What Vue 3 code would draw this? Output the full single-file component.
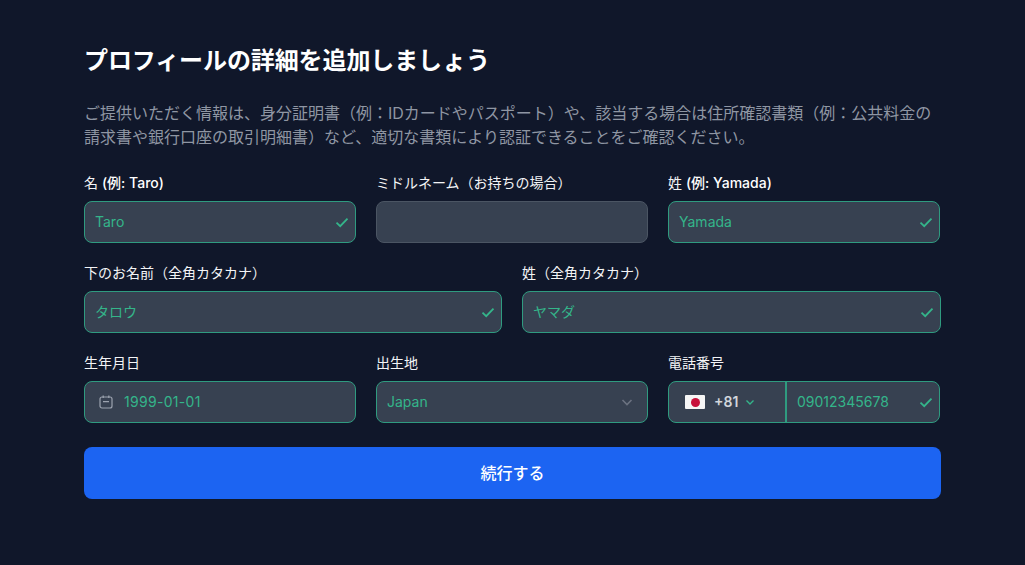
<template>
  <main class="page">
    <h1 class="title">プロフィールの詳細を追加しましょう</h1>
    <p class="lead">
      ご提供いただく情報は、身分証明書（例：IDカードやパスポート）や、該当する場合は住所確認書類（例：公共料金の請求書や銀行口座の取引明細書）など、適切な書類により認証できることをご確認ください。
    </p>

    <form class="form" @submit.prevent>
      <div class="row three">
        <div v-for="f in firstRow" :key="f.label" class="field">
          <label class="label">{{ f.label }}<span v-if="f.hint" class="hint">{{ f.hint }}</span></label>
          <div class="box" :class="{ valid: f.value }">
            <span class="value">{{ f.value }}</span>
            <svg v-if="f.value" class="check" viewBox="0 0 16 16"><path d="M2.5 8.6 6.2 12.2 13.5 4.6" /></svg>
          </div>
        </div>
      </div>

      <div class="row two">
        <div v-for="f in kanaRow" :key="f.label" class="field">
          <label class="label">{{ f.label }}</label>
          <div class="box valid">
            <span class="value">{{ f.value }}</span>
            <svg class="check" viewBox="0 0 16 16"><path d="M2.5 8.6 6.2 12.2 13.5 4.6" /></svg>
          </div>
        </div>
      </div>

      <div class="row three">
        <div class="field">
          <label class="label">生年月日</label>
          <div class="box valid date">
            <svg class="calendar" viewBox="0 0 16 16">
              <rect x="2" y="3" width="12" height="11" rx="2" />
              <path d="M5.2 1.6V4M10.8 1.6V4M5 7.6H11" />
            </svg>
            <span class="value date-value">1999-01-01</span>
          </div>
        </div>
        <div class="field">
          <label class="label">出生地</label>
          <div class="box valid">
            <span class="value">Japan</span>
            <svg class="chevron" viewBox="0 0 16 16"><path d="M3.5 6 8 10.5 12.5 6" /></svg>
          </div>
        </div>
        <div class="field">
          <label class="label">電話番号</label>
          <div class="box valid phone">
            <div class="dial">
              <span class="flag"><span class="sun"></span></span>
              <span class="code">+81</span>
              <svg class="dial-chevron" viewBox="0 0 16 16"><path d="M4 6.2 8 10.2 12 6.2" /></svg>
            </div>
            <div class="number">
              <span class="value">09012345678</span>
              <svg class="check" viewBox="0 0 16 16"><path d="M2.5 8.6 6.2 12.2 13.5 4.6" /></svg>
            </div>
          </div>
        </div>
      </div>

      <button class="submit" type="submit">続行する</button>
    </form>
  </main>
</template>

<script setup>
const firstRow = [
  { label: '名 ', hint: '(例: Taro)', value: 'Taro' },
  { label: 'ミドルネーム（お持ちの場合）', value: '' },
  { label: '姓 ', hint: '(例: Yamada)', value: 'Yamada' }
]

const kanaRow = [
  { label: '下のお名前（全角カタカナ）', value: 'タロウ' },
  { label: '姓（全角カタカナ）', value: 'ヤマダ' }
]
</script>

<style>
html, body { margin: 0; background: #10172a; }
</style>

<style scoped>
.page {
  box-sizing: border-box;
  width: 1025px;
  height: 565px;
  overflow: hidden;
  padding: 43px 84px 0;
  background: #10172a;
  color: #fff;
  font-family: Inter, "Noto Sans CJK JP", sans-serif;
}

.title { margin: 0; font-size: 24px; line-height: 36px; font-weight: 700; letter-spacing: -0.1px; }

.lead { margin: 22px 0 0; font-size: 16px; line-height: 24px; color: #8f96a3; }

.form { margin-top: 24px; display: flex; flex-direction: column; }

.row { display: grid; gap: 20px; margin-bottom: 20px; }
.three { grid-template-columns: repeat(3, 272px); }
.two { grid-template-columns: 418px 419px; }

.field { display: flex; flex-direction: column; }

.label { font-size: 14px; line-height: 20px; font-weight: 400; margin-bottom: 8px; color: #f3f4f6; }
.hint { font-weight: 500; color: #fff; }

.box {
  box-sizing: border-box;
  height: 42px;
  display: flex;
  align-items: center;
  justify-content: space-between;
  padding: 0 10px;
  border: 1px solid #4b5563;
  border-radius: 8px;
  background: #374151;
}
.box.valid { border-color: #2f9b80; }

.value { font-size: 14px; line-height: 20px; color: #34b58a; }
.date-value { letter-spacing: 0.3px; }

.check { width: 16px; height: 16px; flex: none; margin-right: -5px; }
.check path { fill: none; stroke: #34b58a; stroke-width: 1.8; }

.date { justify-content: flex-start; padding-left: 13px; gap: 10px; }
.calendar { width: 16px; height: 16px; flex: none; }
.calendar rect, .calendar path { fill: none; stroke: #9ca3af; stroke-width: 1.2; }

.chevron { width: 16px; height: 16px; margin-right: 2px; }
.chevron path { fill: none; stroke: #6b7280; stroke-width: 1.6; }

.phone { padding: 0; justify-content: flex-start; }

.dial {
  box-sizing: border-box;
  width: 118px;
  height: 100%;
  display: flex;
  align-items: center;
  padding-left: 16px;
  border-right: 2px solid #2f9b80;
}
.flag {
  width: 20px;
  height: 14px;
  border-radius: 1px;
  background: #f5f5f5;
  display: flex;
  align-items: center;
  justify-content: center;
}
.sun { width: 9px; height: 9px; border-radius: 50%; background: #c8103a; }
.code { margin-left: 9px; font-size: 14px; line-height: 20px; font-weight: 600; color: #d1d5db; }
.dial-chevron { width: 14px; height: 14px; margin-left: 5px; }
.dial-chevron path { fill: none; stroke: #34b58a; stroke-width: 1.6; }

.number {
  flex: 1;
  display: flex;
  align-items: center;
  justify-content: space-between;
  padding: 0 10px;
}

.submit {
  height: 52px;
  margin-top: 4px;
  border: 0;
  border-radius: 8px;
  background: #1c64f2;
  color: #fff;
  font: 500 16px/24px Inter, "Noto Sans CJK JP", sans-serif;
}
</style>
